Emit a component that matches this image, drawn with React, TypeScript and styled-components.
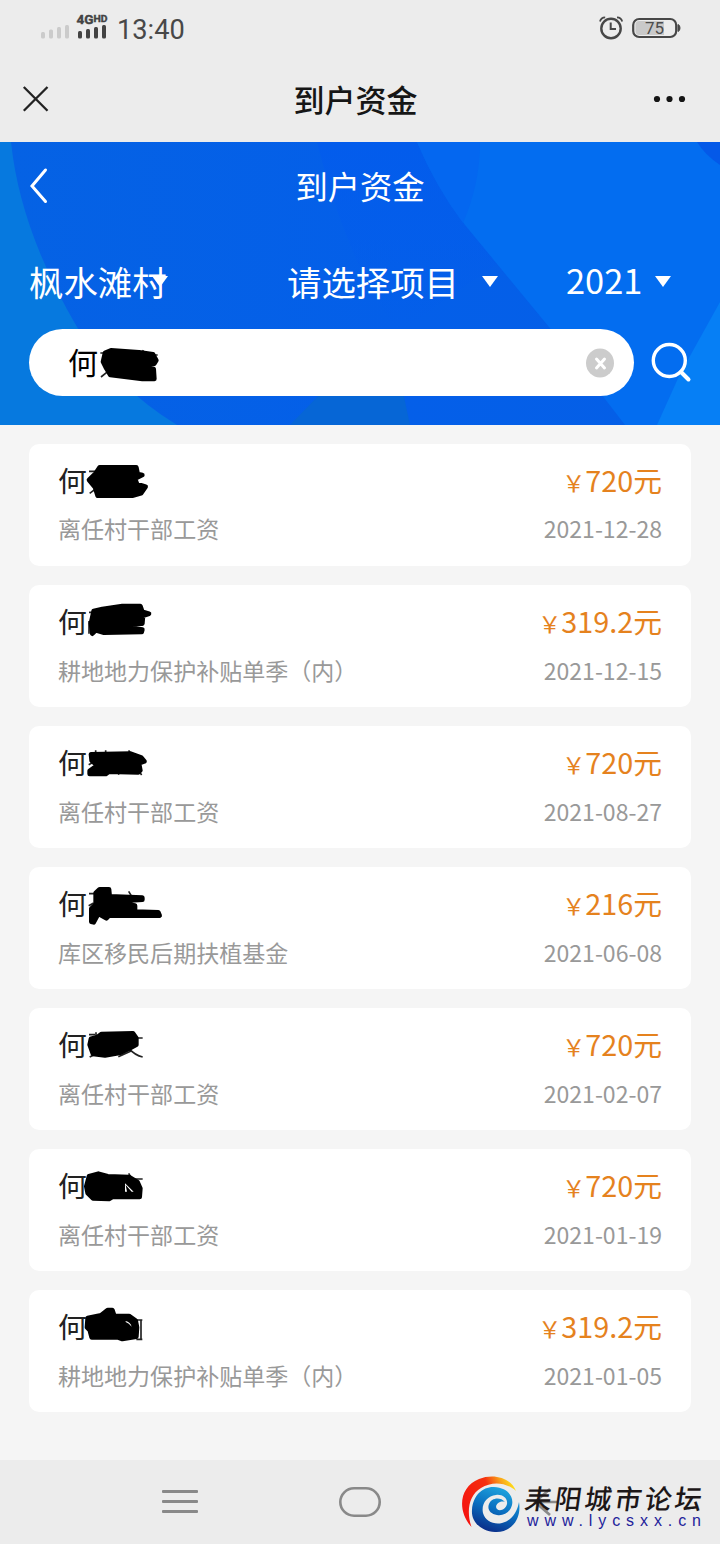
import React from 'react';
import styled, { createGlobalStyle } from 'styled-components';

const Global = createGlobalStyle`
  * { box-sizing: border-box; }
  body { margin: 0; background: #f5f5f5; }
`;

const Screen = styled.div`
  width: 720px;
  height: 1544px;
  display: flex;
  flex-direction: column;
  background: #f5f5f5;
  font-family: "Noto Sans CJK SC", sans-serif;
  overflow: hidden;
`;

const StatusBar = styled.div`
  height: 56px;
  padding: 0 39px 0 40px;
  display: flex;
  justify-content: space-between;
  background: #ececec;
`;

const StatusGroup = styled.div`
  display: flex;
  align-items: flex-start;
`;

const Clock = styled.span`
  font: 400 27.2px/32px Roboto, sans-serif;
  color: #484848;
  margin: 14px 0 0 7px;
`;

const SignalIcon = styled.svg`
  display: block;
  margin-top: 12px;
`;

const AppBar = styled.div`
  height: 86px;
  padding: 0 33px 0 22px;
  display: grid;
  grid-template-columns: 60px 1fr 60px;
  align-items: center;
  background: #ececec;

  svg { display: block; }
  svg:last-child { justify-self: end; }
`;

const AppTitle = styled.h1`
  margin: 0;
  padding-left: 2px;
  font-size: 31px;
  line-height: 40px;
  font-weight: 500;
  color: #161616;
  text-align: center;
`;

const Header = styled.header`
  position: relative;
  isolation: isolate;
  height: 283px;
  display: flex;
  flex-direction: column;
  color: #fff;
`;

const HeaderArt = styled.svg`
  position: absolute;
  inset: 0;
  z-index: -1;
`;

const TitleRow = styled.div`
  height: 88px;
  padding: 0 29px;
  display: grid;
  grid-template-columns: 40px 1fr 40px;
  align-items: center;
`;

const PageTitle = styled.h2`
  margin: 0 0 3px;
  font-size: 32.3px;
  line-height: 44px;
  font-weight: 400;
  text-align: center;
`;

const FilterRow = styled.div`
  height: 99px;
  padding: 3px 47px 0 29px;
  display: flex;
  align-items: center;
`;

const Filter = styled.div<{ $width: number; $before?: number }>`
  width: ${(p) => p.$width}px;
  margin-left: ${(p) => p.$before ?? 0}px;
  display: flex;
  align-items: center;
  justify-content: space-between;
  font-size: 34.4px;
  line-height: 48px;
  white-space: nowrap;
`;

const FilterLabel = styled.span<{ $lift?: number }>`
  min-width: 0;
  margin-top: -${(p) => p.$lift ?? 0}px;
`;

const Caret = styled.i`
  flex: none;
  width: 0;
  height: 0;
  margin-top: 0;
  border: 8.5px solid transparent;
  border-top: 11px solid #fff;
  border-bottom: 0;
`;

const SearchRow = styled.div`
  padding: 0 28px 0 29px;
  display: flex;
  align-items: center;
  justify-content: space-between;
`;

const SearchBox = styled.div`
  position: relative;
  width: 605px;
  height: 67px;
  padding: 0 20px 0 39px;
  border-radius: 34px;
  display: flex;
  align-items: center;
  justify-content: space-between;
  background: #fff;
  color: #000;
  font-size: 30px;
`;

const Query = styled.span`
  margin-top: -3px;
`;

const List = styled.main`
  flex: 1;
  padding: 19px 29px 0;
  display: flex;
  flex-direction: column;
  gap: 19px;
`;

const Card = styled.article`
  position: relative;
  height: 122px;
  padding: 15px 29px 0;
  border-radius: 10px;
  background: #fff;
`;

const CardLine = styled.div<{ $gap?: number }>`
  display: flex;
  justify-content: space-between;
  align-items: baseline;
  margin-top: ${(p) => p.$gap ?? 0}px;
`;

const PersonName = styled.span`
  font-size: 28.8px;
  line-height: 42px;
  color: #222;
`;

const Amount = styled.span`
  font-size: 28.8px;
  line-height: 42px;
  color: #e5821e;
`;

const Currency = styled.small`
  font-size: 23px;
`;

const Note = styled.span`
  font-size: 23.04px;
  line-height: 34px;
  color: #999;
`;

const Strike = styled.svg`
  position: absolute;
  left: 0;
  top: 0;
`;

const SystemNav = styled.nav`
  position: relative;
  height: 84px;
  padding: 0 162px;
  display: flex;
  align-items: center;
  justify-content: space-between;
  background: #ececec;
`;

const Watermark = styled.div`
  position: absolute;
  left: 460px;
  top: 15px;
  display: flex;
  gap: 7px;
`;

const WatermarkText = styled.div`
  display: flex;
  flex-direction: column;
  padding-top: 6px;
`;

const SiteName = styled.span`
  margin-left: -2px;
  font-size: 27px;
  line-height: 34px;
  font-weight: 500;
  color: #1d1718;
  letter-spacing: 3px;
  white-space: nowrap;
  transform: skewX(-8deg);
`;

const SiteUrl = styled.span`
  margin: -3px 0 0;
  font: 400 16px/18px "Liberation Sans", sans-serif;
  letter-spacing: 5.9px;
  color: #23239b;
  white-space: nowrap;
`;

interface Mark {
  blob: string;
  hairs?: string;
  gap?: string;
}

interface PaymentRecord {
  amount: string;
  note: string;
  date: string;
  mark: Mark;
}

const records: PaymentRecord[] = [
  {
    amount: '720', note: '离任村干部工资', date: '2021-12-28',
    mark: {
      blob: 'M212 70L322 70L326 90L340 93L318 104L324 120L350 128L336 148L310 155L206 155L198 130L180 108L200 88Z',
      hairs: 'M180 82H198M182 148L198 136',
    },
  },
  {
    amount: '319.2', note: '耕地地力保护补贴单季（内）', date: '2021-12-15',
    mark: {
      blob: 'M194 78L220 72L280 63L334 63L340 80L360 86L342 92L340 116L240 118L340 134L338 141L225 143L200 136L190 146L186 115Z',
      hairs: 'M180 82H198M180 108V146',
    },
  },
  {
    amount: '720', note: '离任村干部工资', date: '2021-08-27',
    mark: {
      blob: 'M186 85L305 83L336 94L346 106L330 112L334 133L328 139L240 137L230 144L182 144L182 135L205 118L188 104Z',
      hairs: 'M200 73V84M230 73V84M299 73L305 84M179 116L194 108M264 136L270 146M330 136L338 147',
    },
  },
  {
    amount: '216', note: '库区移民后期扶植基金', date: '2021-06-08',
    mark: {
      blob: 'M200 78L212 67L240 67L242 88L340 92L340 98L248 104L318 116L318 134L388 136L392 146L240 146L232 154L208 140L194 166L187 164L187 125L200 112Z',
      hairs: 'M180 80H198M179 116L194 108M299 73L308 88M276 100L286 110',
    },
  },
  {
    amount: '720', note: '离任村干部工资', date: '2021-02-07',
    mark: {
      blob: 'M186 92L204 88L218 78L312 76L322 90L322 110L300 122L275 134L228 142L192 138L182 110Z',
      hairs: 'M180 80H198M201 73V84M313 90H341M268 146L308 128M300 122Q318 142 341 147M182 147L196 140',
    },
  },
  {
    amount: '720', note: '离任村干部工资', date: '2021-01-19',
    mark: {
      blob: 'M180 82L208 74L236 82L300 84L326 100L334 118L332 144L250 144L240 150L192 148L176 132L172 112Z',
      hairs: 'M300 90H341M299 73L308 88',
      gap: 'M288 103V128H294L290 108L308 128H314Z',
    },
  },
  {
    amount: '319.2', note: '耕地地力保护补贴单季（内）', date: '2021-01-05',
    mark: {
      blob: 'M176 84L216 76L236 60L250 60L256 78L300 78L320 92L324 112L322 140L280 147L266 142L188 142L182 120L174 112Z',
      hairs: 'M320 90H340M322 148H340M336 92V148',
      gap: 'M290 93Q304 96 308 110Q300 100 290 96Z',
    },
  },
];

const searchMark: Mark = {
  blob: 'M228 72L246 64L330 70L372 76L382 94L376 104L340 112L374 120L376 150L340 150L244 138L232 118L222 98Z',
  hairs: 'M214 72H232M216 144L236 128M340 64L348 70M374 78H386',
};

const MarkerStrike = ({ mark }: { mark: Mark }) => (
  <Strike width="150" height="60" viewBox="0 0 450 180" fill="none" strokeLinejoin="round">
    {mark.hairs && <path d={mark.hairs} stroke="#222" strokeWidth="5" />}
    <path d={mark.blob} fill="#000" stroke="#000" strokeWidth="14" />
    {mark.gap && <path d={mark.gap} fill="#fff" />}
  </Strike>
);

const HeaderBackdrop = () => (
  <HeaderArt width="720" height="283" viewBox="0 0 720 283">
    <defs>
      <linearGradient id="mid" x1="0" y1="0" x2="1" y2="0">
        <stop offset="0" stopColor="#0562e4" />
        <stop offset="0.55" stopColor="#045fe9" />
        <stop offset="1" stopColor="#055fe6" />
      </linearGradient>
      <linearGradient id="crest" x1="0" y1="0" x2="0" y2="1">
        <stop offset="0" stopColor="#035cec" />
        <stop offset="1" stopColor="#035cec" stopOpacity="0" />
      </linearGradient>
    </defs>
    <rect width="720" height="283" fill="#0679df" />
    <path d="M11 0Q20 88 77 185Q115 245 177 283H720V0Z" fill="url(#mid)" />
    <path d="M317 0H420L500 120L400 190Q350 130 317 0Z" fill="url(#crest)" />
    <path d="M290 283L322 250H403L410 283Z" fill="#0666d6" />
    <path d="M417 0Q436 45 465 83L549 185L605 257L625 283H720V0Z" fill="#036df0" />
    <path d="M417 0H480Q480 42 463 81Q436 45 417 0Z" fill="#0467f0" />
    <path d="M720 160L680 232L657 283H720Z" fill="#067ff5" />
    <path d="M697 0Q705 13 720 23V0Z" fill="#0459e8" />
  </HeaderArt>
);

export default function App() {
  return (
    <Screen lang="zh-CN">
      <Global />
      <StatusBar>
        <StatusGroup>
          <SignalIcon width="70" height="30" viewBox="0 0 70 30">
            <g fill="#cbcbcb">
              <rect x="1" y="20" width="4" height="6.5" rx="1.5" />
              <rect x="9" y="17.5" width="4" height="9" rx="1.5" />
              <rect x="17" y="15" width="4" height="11.5" rx="1.5" />
              <rect x="25" y="13" width="4" height="13.5" rx="1.5" />
            </g>
            <g fill="#434343">
              <rect x="38" y="19" width="4" height="7.5" rx="1.5" />
              <rect x="46" y="17" width="4" height="9.5" rx="1.5" />
              <rect x="54" y="15" width="4" height="11.5" rx="1.5" />
              <rect x="62" y="13" width="4" height="13.5" rx="1.5" />
            </g>
            <g fill="#434343" stroke="#434343" strokeWidth="0.4" fontFamily="Roboto, sans-serif" fontWeight="700">
              <text x="36.5" y="12.3" fontSize="13.5" textLength="17" lengthAdjust="spacingAndGlyphs">4G</text>
              <text x="53.5" y="9.6" fontSize="9.8" textLength="14" lengthAdjust="spacingAndGlyphs">HD</text>
            </g>
          </SignalIcon>
          <Clock>13:40</Clock>
        </StatusGroup>
        <SignalIcon width="82" height="30" viewBox="0 0 82 30">
          <g fill="none" stroke="#474747">
            <circle cx="12" cy="16.5" r="9.7" strokeWidth="2.4" />
            <path d="M11.7 10.5V17H17" strokeWidth="2" />
            <path d="M1 9.5Q2 5.5 6.2 5.4M18 5.4Q22.2 5.5 23.2 9.5" strokeWidth="1.8" />
            <rect x="34.2" y="7" width="43" height="18" rx="6" strokeWidth="2.2" />
          </g>
          <path d="M40 9H65V23H40Q36.5 23 36.5 19V13Q36.5 9 40 9Z" fill="#c9c9c9" />
          <path d="M79 12.5Q81 13 81 16Q81 19 79 19.5Z" fill="#474747" stroke="#474747" />
          <text x="46" y="22" fontSize="17" fontFamily="Roboto, sans-serif" fill="#4c4c4c">75</text>
        </SignalIcon>
      </StatusBar>

      <AppBar>
        <svg width="28" height="28" viewBox="0 0 28 28">
          <path d="M1.8 2L25.5 25.7M25.5 2L1.8 25.7" stroke="#222" strokeWidth="2.3" />
        </svg>
        <AppTitle>到户资金</AppTitle>
        <svg width="36" height="10" viewBox="0 0 36 10" fill="#151515">
          <circle cx="6" cy="5" r="3.1" />
          <circle cx="18.5" cy="5" r="3.1" />
          <circle cx="31" cy="5" r="3.1" />
        </svg>
      </AppBar>

      <Header>
        <HeaderBackdrop />
        <TitleRow>
          <svg width="20" height="38" viewBox="0 0 20 38">
            <path d="M16.5 3L3 19L16.5 34.5" fill="none" stroke="#fff" strokeWidth="3" strokeLinecap="round" />
          </svg>
          <PageTitle>到户资金</PageTitle>
        </TitleRow>
        <FilterRow>
          <Filter $width={139}>
            <FilterLabel>枫水滩村</FilterLabel>
            <Caret />
          </Filter>
          <Filter $width={211} $before={119}>
            <FilterLabel>请选择项目</FilterLabel>
            <Caret />
          </Filter>
          <Filter $width={105} $before={68}>
            <FilterLabel $lift={4}>2021</FilterLabel>
            <Caret />
          </Filter>
        </FilterRow>
        <SearchRow>
          <SearchBox>
            <Query>何</Query>
            <MarkerStrike mark={searchMark} />
            <svg width="28" height="30" viewBox="0 0 28 30">
              <ellipse cx="14" cy="15" rx="14" ry="14.5" fill="#ccc" />
              <path d="M10.5 11L18.5 20M18.5 11L10.5 20" stroke="#fff" strokeWidth="3" strokeLinecap="round" />
            </svg>
          </SearchBox>
          <svg width="41" height="41" viewBox="0 0 41 41" fill="none" stroke="#fff" strokeWidth="3.4">
            <circle cx="18.3" cy="18.5" r="16" />
            <path d="M30 30L37.5 37.5" strokeLinecap="round" strokeWidth="4" />
          </svg>
        </SearchRow>
      </Header>

      <List>
        {records.map((r, i) => (
          <Card key={r.date}>
            <CardLine>
              <PersonName>何</PersonName>
              <Amount><Currency>￥</Currency>{r.amount}元</Amount>
            </CardLine>
            <CardLine $gap={i === 0 ? 8 : 9}>
              <Note>{r.note}</Note>
              <Note>{r.date}</Note>
            </CardLine>
            <MarkerStrike mark={r.mark} />
          </Card>
        ))}
      </List>

      <SystemNav>
        <svg width="36" height="26" viewBox="0 0 36 26" fill="#898989">
          <rect y="1" width="36" height="3" rx="1" />
          <rect y="11" width="36" height="3" rx="1" />
          <rect y="21" width="36" height="3" rx="1" />
        </svg>
        <svg width="42" height="30" viewBox="0 0 42 30">
          <rect x="1.3" y="1.3" width="39.4" height="27.4" rx="13.7" fill="none" stroke="#898989" strokeWidth="2.6" />
        </svg>
        <svg width="36" height="30" viewBox="0 0 36 30" fill="none" stroke="#898989" strokeWidth="2.6">
          <path d="M28 2L13 15L28 28M13 15H35" />
        </svg>
        <Watermark>
          <svg width="60" height="60" viewBox="0 0 60 60">
            <defs>
              <linearGradient id="flame" x1="0" y1="0.6" x2="1" y2="0.2">
                <stop offset="0" stopColor="#f5150f" />
                <stop offset="0.55" stopColor="#f5300f" />
                <stop offset="0.8" stopColor="#f9a51a" />
                <stop offset="1" stopColor="#ffe81a" />
              </linearGradient>
              <linearGradient id="wave" x1="0.7" y1="0" x2="0.3" y2="1">
                <stop offset="0" stopColor="#1fa8e0" />
                <stop offset="0.5" stopColor="#0a6fc0" />
                <stop offset="1" stopColor="#0b2a86" />
              </linearGradient>
            </defs>
            <path d="M11.5 52C-3 36 -1 12 19 4C34 -2 51 3 56 16C46 7 32 6 21 13C9 20 6 36 11.5 52Z" fill="url(#flame)" />
            <path d="M59 27C62 45 50 58 35 57C20 56 11 46 12 35C13 20 23 11.5 34 12C47 12.5 54 21 52 30C50 38 43 41 37 40C30 39 27 34 29 29C31 23 40 21 45 27C39 25 34 31 37 34C40 37 46 34 47 29C48 23 42 19 36 20C27 21 21 29 23 38C25 46 34 50 42 48C51 46 57 38 59 27Z" fill="url(#wave)" />
          </svg>
          <WatermarkText>
            <SiteName>耒阳城市论坛</SiteName>
            <SiteUrl>www.lycsxx.cn</SiteUrl>
          </WatermarkText>
        </Watermark>
      </SystemNav>
    </Screen>
  );
}
